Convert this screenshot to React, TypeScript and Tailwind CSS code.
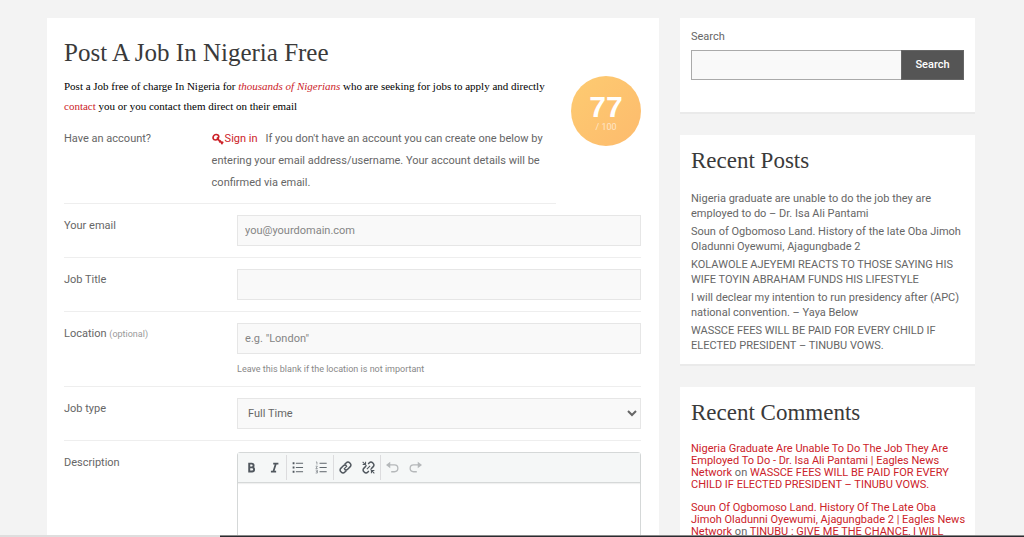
import React from 'react';

const recentPosts = [
  'Nigeria graduate are unable to do the job they are employed to do – Dr. Isa Ali Pantami',
  'Soun of Ogbomoso Land. History of the late Oba Jimoh Oladunni Oyewumi, Ajagungbade 2',
  'KOLAWOLE AJEYEMI REACTS TO THOSE SAYING HIS WIFE TOYIN ABRAHAM FUNDS HIS LIFESTYLE',
  'I will declear my intention to run presidency after (APC) national convention. – Yaya Below',
  'WASSCE FEES WILL BE PAID FOR EVERY CHILD IF ELECTED PRESIDENT – TINUBU VOWS.',
];

const recentComments = [
  {
    author: 'Nigeria Graduate Are Unable To Do The Job They Are Employed To Do - Dr. Isa Ali Pantami | Eagles News Network',
    post: 'WASSCE FEES WILL BE PAID FOR EVERY CHILD IF ELECTED PRESIDENT – TINUBU VOWS.',
  },
  {
    author: 'Soun Of Ogbomoso Land. History Of The Late Oba Jimoh Oladunni Oyewumi, Ajagungbade 2 | Eagles News Network',
    post: 'TINUBU : GIVE ME THE CHANCE, I WILL',
  },
];

const fieldClass =
  'block h-[31px] w-full border border-[#e6e6e6] bg-[#f9f9f9] text-[11px] text-[#666] placeholder:text-[#858585] outline-none';

function KeyIcon() {
  return (
    <svg viewBox="0 0 12 12" className="mr-px inline-block h-3 w-3 align-[-3px]" fill="none" stroke="currentColor" aria-hidden="true">
      <path d="M1.300 5.800C.6 3.600 2 1.700 4 1.500c1.800-.1 2.900.8 2.700 2.200C6.500 5.600 5 7 3.300 7 2.200 7 1.500 6.500 1.300 5.800z" strokeWidth="1.700" />
      <path d="M5.400 4.200l.6 2.200 5 4M7.200 9.400l1.600-2M9.400 11.200l1.600-2.600" strokeWidth="1.700" />
    </svg>
  );
}

function ToolButton({ label, muted = false, children }: { label: string; muted?: boolean; children: React.ReactNode }) {
  return (
    <button
      type="button"
      aria-label={label}
      className={`flex h-6 w-[23px] items-center justify-center ${muted ? 'text-[#b5b8ba]' : 'text-[#50575e]'}`}
    >
      <svg viewBox="0 0 20 20" className="h-[13px] w-[13px]" fill="none" stroke="currentColor" strokeWidth="2" aria-hidden="true">
        {children}
      </svg>
    </button>
  );
}

function Separator() {
  return <span className="h-[25px] w-px bg-[#dcdcde]" />;
}

function Toolbar() {
  return (
    <div className="flex h-[30px] items-center border-b border-[#d5d8d8] bg-[#f5f7f7] pl-[2px] shadow-[0_1px_1px_rgba(0,0,0,0.06)]">
      <ToolButton label="Bold">
        <path d="M6.500 4h3.800a2.800 2.800 0 0 1 0 5.800H6.500zM6.500 9.800h4.300a3.200 3.200 0 0 1 0 6.400H6.500z" strokeWidth="3" />
      </ToolButton>
      <ToolButton label="Italic">
        <path d="M8 4h8M4.500 16.200h8M12.200 4L8.300 16.200" strokeWidth="2.700" />
      </ToolButton>
      <Separator />
      <ToolButton label="Bulleted list">
        <path d="M6 3.500H17M6 10H17M6 16.500H17" strokeWidth="1.400" />
        <path d="M1 3.500h2.800M1 10h2.800M1 16.500h2.800" strokeWidth="2.800" />
      </ToolButton>
      <ToolButton label="Numbered list">
        <path d="M7 3.500h11M7 10h11M7 16.500h11" strokeWidth="1.400" />
        <path d="M1.500 1.500H3V5.500M1 8h2.700L1.300 11.500H4.200M1 14h2.700v4.500H1M1.500 16.300h2" strokeWidth="1" opacity=".8" />
      </ToolButton>
      <Separator />
      <ToolButton label="Insert link">
        <path d="M8.500 5.500l2.800-2.800a3.500 3.500 0 0 1 5 0l1 1a3.500 3.500 0 0 1 0 5l-4 4a3.500 3.500 0 0 1-5 0" strokeWidth="2.300" />
        <path d="M11.500 14.500l-2.800 2.800a3.500 3.500 0 0 1-5 0l-1-1a3.500 3.500 0 0 1 0-5l4-4a3.500 3.500 0 0 1 5 0" strokeWidth="2.300" />
        <path d="M7.500 12.500l5-5" strokeWidth="1.800" />
      </ToolButton>
      <ToolButton label="Remove link">
        <path d="M9.500 4.500l1.800-1.800a3.500 3.500 0 0 1 5 0l1 1a3.500 3.500 0 0 1 0 5l-3.500 3.500" strokeWidth="2.300" />
        <path d="M10.500 15.500l-1.800 1.800a3.500 3.500 0 0 1-5 0l-1-1a3.500 3.500 0 0 1 0-5l3.500-3.500" strokeWidth="2.300" />
        <path d="M7.500 12.500l5-5M1 1.500l6 6M5.500 1v4M1 5.500h4M13 13l6 6M14.500 15V19M15 14.500H19" strokeWidth="1.600" />
      </ToolButton>
      <Separator />
      <ToolButton label="Undo" muted>
        <path d="M4 6h9a5 5 0 0 1 0 10.500H8" />
        <path d="M0 6l6.500-5v10z" fill="currentColor" stroke="none" />
      </ToolButton>
      <ToolButton label="Redo" muted>
        <path d="M16 6H7a5 5 0 0 0 0 10.500H12" />
        <path d="M20 6l-6.500-5v10z" fill="currentColor" stroke="none" />
      </ToolButton>
    </div>
  );
}

function FormRow({ id, label, optional = false, children }: { id: string; label: string; optional?: boolean; children: React.ReactNode }) {
  return (
    <div className="flex border-b border-[#eee] py-[11px]">
      <label htmlFor={id} className="w-[30%] shrink-0 leading-[22px]">
        {label} {optional && <small className="text-[9px] text-[#999]">(optional)</small>}
      </label>
      <div className="min-w-0 flex-1">{children}</div>
    </div>
  );
}

function Widget({ title, children }: { title?: string; children: React.ReactNode }) {
  return (
    <section className="border-b-2 border-[#eaeaea] bg-white px-[11px]">
      {title && (
        <h2 className="pt-3 pb-4 font-['Liberation_Serif',serif] text-[23px] leading-7 text-[#3a3a3a]">{title}</h2>
      )}
      {children}
    </section>
  );
}

export default function App() {
  return (
    <div className="h-screen overflow-hidden bg-[#f3f3f3] font-[Roboto,sans-serif] text-[11px] text-[#666]">
      <div className="flex items-start gap-[21px] pt-[18px] pr-[49px] pl-[47px]">
        <main className="min-w-0 flex-1 bg-white pt-[19px] pr-[18px] pl-[17px]">
          <h1 className="mb-[7px] font-['Liberation_Serif',serif] text-[25px] leading-8 text-[#3a3a3a]">
            Post A Job In Nigeria Free
          </h1>

          <div className="flex items-start gap-[15px]">
            <div className="min-w-0 flex-1">
              <p className="mb-3 font-['Liberation_Serif',serif] leading-5 text-black">
                Post a Job free of charge In Nigeria for{' '}
                <a href="#" className="text-[#cc2229] italic">thousands of Nigerians</a> who are seeking for jobs to apply and directly{' '}
                <a href="#" className="text-[#cc2229]">contact</a> you or you contact them direct on their email
              </p>
              <div className="flex border-b border-[#eee] pb-[9px] leading-[22px]">
                <span className="w-[30%] shrink-0">Have an account?</span>
                <div className="min-w-0 flex-1">
                  <a href="#" className="mr-2 text-[#cc2229]">
                    <KeyIcon />
                    Sign in
                  </a>
                  If you don't have an account you can create one below by entering your email address/username. Your account
                  details will be confirmed via email.
                </div>
              </div>
            </div>
            <div className="flex h-[70px] w-[70px] shrink-0 flex-col items-center justify-center rounded-full bg-gradient-to-br from-[#fdcb71] to-[#fdbb6d] pt-[3px] text-white">
              <span className="font-['Liberation_Sans',sans-serif] text-[30px] leading-7 font-bold">77</span>
              <span className="text-[9px] leading-3 opacity-60">/ 100</span>
            </div>
          </div>

          <form onSubmit={(e) => e.preventDefault()}>
            <FormRow id="email" label="Your email">
              <input id="email" type="email" placeholder="you@yourdomain.com" className={`${fieldClass} px-[7px]`} />
            </FormRow>
            <FormRow id="job-title" label="Job Title">
              <input id="job-title" type="text" className={`${fieldClass} px-[7px]`} />
            </FormRow>
            <FormRow id="location" label="Location" optional>
              <input id="location" type="text" placeholder={'e.g. "London"'} className={`${fieldClass} px-[7px]`} />
              <small className="mt-[9px] block text-[9px] leading-3 text-[#888]">Leave this blank if the location is not important</small>
            </FormRow>
            <FormRow id="job-type" label="Job type">
              <select id="job-type" defaultValue="Full Time" className={`${fieldClass} pl-[6px]`}>
                <option>Full Time</option>
                <option>Part Time</option>
              </select>
            </FormRow>
            <FormRow id="description" label="Description">
              <div className="rounded-t-[3px] border border-[#d5d8d8]">
                <Toolbar />
                <textarea id="description" rows={8} className="block w-full resize-none p-2 outline-none" />
              </div>
            </FormRow>
          </form>
        </main>

        <aside className="flex w-[295px] shrink-0 flex-col gap-[21px]">
          <Widget>
            <form onSubmit={(e) => e.preventDefault()} className="pt-[9px] pb-8">
              <label htmlFor="search" className="mb-[3px] block leading-5">Search</label>
              <div className="flex">
                <input id="search" type="search" className="h-[30px] min-w-0 flex-1 border border-r-0 border-[#aaa] bg-[#f9f9f9] px-2 outline-none" />
                <button type="submit" className="h-[30px] w-[63px] border border-[#666] bg-[#555] font-medium text-white">Search</button>
              </div>
            </form>
          </Widget>

          <Widget title="Recent Posts">
            <ul className="space-y-[3px] pb-[11px] leading-[15px]">
              {recentPosts.map((post) => (
                <li key={post}>
                  <a href="#">{post}</a>
                </li>
              ))}
            </ul>
          </Widget>

          <Widget title="Recent Comments">
            <ul className="-mr-[3px] space-y-[11px] pb-3 leading-3">
              {recentComments.map((comment) => (
                <li key={comment.author}>
                  <a href="#" className="text-[#cc2229]">{comment.author}</a> on{' '}
                  <a href="#" className="text-[#cc2229]">{comment.post}</a>
                </li>
              ))}
            </ul>
          </Widget>
        </aside>
      </div>

      <div className="fixed inset-x-0 bottom-0 flex h-[2px]">
        <span className="w-[220px] bg-[#dedede]" />
        <span className="flex-1 border-t border-[#888] bg-[#2b2b30]" />
      </div>
    </div>
  );
}
